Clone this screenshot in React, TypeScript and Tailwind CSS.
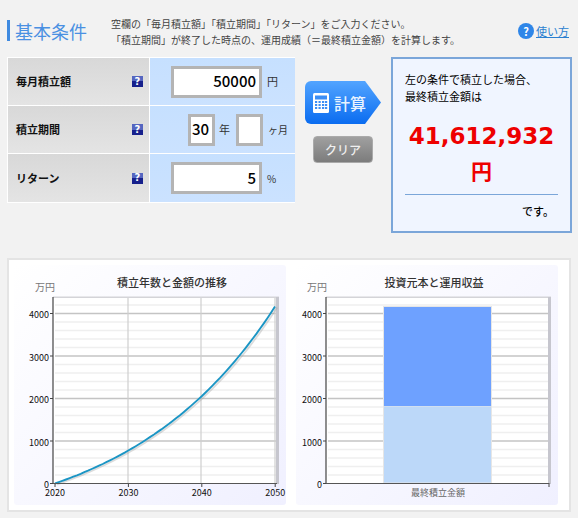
import React from "react";

const minor = [200, 400, 600, 800, 1200, 1400, 1600, 1800, 2200, 2400, 2600, 2800, 3200, 3400, 3600, 3800, 4200];
const major = [1000, 2000, 3000, 4000];
const Y0 = 218.5;
const yOf = (v: number) => Y0 - v * 0.0425;

function curve(x0: number) {
  const pts: string[] = [];
  const r = 0.05 / 12;
  for (let m = 0; m <= 360; m += 6) {
    const v = (5 * (Math.pow(1 + r, m) - 1)) / r;
    pts.push(`${(x0 + (m / 360) * 220).toFixed(1)},${yOf(v).toFixed(1)}`);
  }
  return pts.join(" ");
}

function Chart({ title, axis, right, titleX, unitX, children, w }: { title: string; axis: number; right: number; titleX: number; unitX: number; children: React.ReactNode; w: number }) {
  return (
    <svg width={w} height={240} viewBox={`0 0 ${w} 240`} className="block">
      <text x={titleX} y={22} textAnchor="middle" fontSize={11} fontWeight={500} fill="#333">{title}</text>
      <text x={unitX} y={26} fontSize={10} fill="#777">万円</text>
      <rect x={axis} y={32} width={right - axis} height={187} fill="#ffffff" />
      <rect x={axis} y={31.5} width={right - axis + 2} height={1.5} fill="#d4d4d8" />
      <rect x={right - 1} y={32} width={3} height={187} fill="#c6c6ce" />
      {minor.map((v) => (
        <line key={v} x1={axis + 2} x2={right - 1} y1={yOf(v)} y2={yOf(v)} stroke="#efefef" strokeWidth={1.6} />
      ))}
      {major.map((v) => (
        <line key={v} x1={axis + 2} x2={right - 1} y1={yOf(v)} y2={yOf(v)} stroke="#c4c4c4" strokeWidth={1.3} />
      ))}
      {children}
      <line x1={axis} x2={axis} y1={32} y2={219} stroke="#444" strokeWidth={1.2} />
      <line x1={axis - 3} x2={right} y1={218.5} y2={218.5} stroke="#555" strokeWidth={1.2} />
      {[0, 1000, 2000, 3000, 4000].map((v) => (
        <g key={v}>
          <line x1={axis - 3} x2={axis} y1={yOf(v)} y2={yOf(v)} stroke="#444" strokeWidth={1} />
          <text x={axis - 4} y={yOf(v) + 4.5} textAnchor="end" fontSize={9} fill="#111">{v}</text>
        </g>
      ))}
    </svg>
  );
}

function Help() {
  return (
    <span className="flex h-[11px] w-[11px] items-center justify-center bg-[linear-gradient(#5566c0_50%,#16208c_50%)] text-[10px] leading-none font-bold text-white font-['DejaVu_Sans',sans-serif]">?</span>
  );
}

function Row({ label, children, last }: { label: string; children: React.ReactNode; last?: boolean }) {
  return (
    <div className={`flex h-[48px] ${last ? "" : "border-b border-white"}`}>
      <div className="flex w-[142px] items-center justify-between border-r border-white bg-[linear-gradient(#d8d8d8,#e4e4e4)] pr-[6px] pl-[8px] text-[11px] font-bold text-[#111]">
        <span>{label}</span>
        <Help />
      </div>
      <div className="flex flex-1 items-center bg-[linear-gradient(#c6e0ff,#cbe2ff)] text-[11px] text-[#333]">{children}</div>
    </div>
  );
}

function Box({ w, value }: { w: string; value: string }) {
  return (
    <div className={`flex h-[32px] items-center justify-end border-[3px] border-[#b4b4b4] bg-white pr-[3px] text-[15px] font-medium text-black ${w}`}>{value}</div>
  );
}

export default function App() {
  return (
    <div className="h-[518px] w-[578px] overflow-hidden bg-[#f2f2f2] font-['Noto_Sans_CJK_JP','Noto_Sans',sans-serif]">
      <div className="flex h-[57px] items-start pt-[16px] pl-[7px]">
        <div className="mt-[4px] flex h-[21px] w-[80px] items-center border-l-[3px] border-[#3f8ae0] pl-[5px] text-[18px] leading-none whitespace-nowrap text-[#4a90e2]">基本条件</div>
        <div className="ml-[24px] w-[340px] text-[10px] leading-[16px] whitespace-nowrap text-[#444]">
          <div>空欄の「毎月積立額」「積立期間」「リターン」をご入力ください。</div>
          <div>「積立期間」が終了した時点の、運用成績（＝最終積立金額）を計算します。</div>
        </div>
        <div className="mt-[7px] ml-[67px] flex items-center gap-[2px] text-[11px] leading-none text-[#2a7fd0]">
          <span className="flex h-[16px] w-[16px] items-center justify-center rounded-full bg-[#2f86e8] text-[11px] font-bold text-white">?</span>
          <span className="underline whitespace-nowrap">使い方</span>
        </div>
      </div>

      <div className="flex items-start pl-[7px]">
        <div className="w-[288px] border-t border-b border-l border-white">
          <Row label="毎月積立額">
            <div className="ml-[21px] flex items-center">
              <Box w="w-[91px]" value="50000" />
              <span className="ml-[5px]">円</span>
            </div>
          </Row>
          <Row label="積立期間">
            <div className="ml-[38px] flex items-center">
              <Box w="w-[27px]" value="30" />
              <span className="ml-[4px]">年</span>
              <div className="ml-[6px]"><Box w="w-[27px]" value="" /></div>
              <span className="ml-[5px] text-[10px] whitespace-nowrap">ヶ月</span>
            </div>
          </Row>
          <Row label="リターン" last>
            <div className="ml-[21px] flex items-center">
              <Box w="w-[91px]" value="5" />
              <span className="ml-[5px] text-[10px]">%</span>
            </div>
          </Row>
        </div>

        <div className="ml-[10px] flex w-[86px] flex-col items-start pt-[24px]">
          <div className="flex h-[43px] w-[76px] items-center rounded-l-[6px] bg-[linear-gradient(#52a4ff,#0a6cf0)] pl-[8px] text-[16px] font-medium whitespace-nowrap text-[#e8f3ff] [clip-path:polygon(0_0,79%_0,100%_50%,79%_100%,0_100%)]">
            <svg width="16" height="20" viewBox="0 0 16 20" className="mr-[5px] shrink-0">
              <rect width="16" height="20" rx="1.5" fill="#ffffff" />
              <rect x="2" y="2.5" width="12" height="4" fill="#3c8ef5" />
              {[8, 11, 14].map((y) =>
                [2, 5.5, 9, 12].map((x) => <rect key={`${x}-${y}`} x={x} y={y} width="2.2" height="2" fill="#3c8ef5" />)
              )}
            </svg>
            計算
          </div>
          <div className="mt-[12px] ml-[8px] flex h-[27px] w-[60px] items-center justify-center rounded-[4px] border border-[#aaaaaa] bg-[linear-gradient(#a0a0a0,#7c7c7c)] text-[12px] font-medium text-[#f0f0f0]">クリア</div>
        </div>

        <div className="h-[176px] w-[181px] border-2 border-[#7ba6d9] bg-[#f0f5ff] px-[12px] pt-[12px] text-[11px] text-black">
          <div className="leading-[17px] whitespace-nowrap">左の条件で積立した場合、<br />最終積立金額は</div>
          <div className="mt-[15px] -mx-[2px] text-center font-['DejaVu_Sans',sans-serif] text-[23px] leading-[32px] font-bold whitespace-nowrap text-[#ee0000]">41,612,932</div>
          <div className="mt-[3px] text-center text-[21px] leading-[30px] font-bold text-[#ee0000]">円</div>
          <div className="mt-[9px] border-t border-[#7ba6d9] pt-[8px] pr-[4px] text-right font-medium">です。</div>
        </div>
      </div>

      <div className="mt-[25px] ml-[7px] flex h-[254px] w-[564px] gap-[10px] border-2 border-[#e4e4e4] bg-white p-[5px]">
        <div className="h-[240px] w-[272px] rounded-[3px] bg-[linear-gradient(135deg,#ffffff,#f0f0ff)]">
          <Chart title="積立年数と金額の推移" axis={39} right={263} titleX={158} unitX={21} w={272}>
            {[128, 201, 275].map((x) => (
              <line key={x} x1={x - 14} x2={x - 14} y1={33} y2={218} stroke="#cfcfcf" strokeWidth={1.2} />
            ))}
            <polyline points={curve(42)} fill="none" stroke="#9a9a9a" strokeOpacity={0.35} strokeWidth={1.8} transform="translate(1 1)" />
            <polyline points={curve(41)} fill="none" stroke="#1b95c4" strokeWidth={1.9} />
            {[2020, 2030, 2040, 2050].map((yr, i) => (
              <g key={yr}>
                <line x1={41 + i * 73.4} x2={41 + i * 73.4} y1={218} y2={222} stroke="#444" strokeWidth={1} />
                <text x={41 + i * 73.4} y={231} textAnchor="middle" fontSize={9} fill="#111">{yr}</text>
              </g>
            ))}
          </Chart>
        </div>
        <div className="h-[240px] w-[262px] rounded-[3px] bg-[linear-gradient(135deg,#ffffff,#f0f0ff)]">
          <Chart title="投資元本と運用収益" axis={30} right={253} titleX={138} unitX={11} w={262}>
            <rect x={87} y={41} width={109} height={177} fill="#e6e6e6" />
            <rect x={88} y={42} width={107} height={99} fill="#6ea1ff" />
            <rect x={88} y={141.5} width={107} height={76} fill="#bcd8f9" />
            <line x1={253} x2={253} y1={218} y2={222} stroke="#444" strokeWidth={1} />
            <text x={142} y={231} textAnchor="middle" fontSize={9} fill="#666">最終積立金額</text>
          </Chart>
        </div>
      </div>
    </div>
  );
}
